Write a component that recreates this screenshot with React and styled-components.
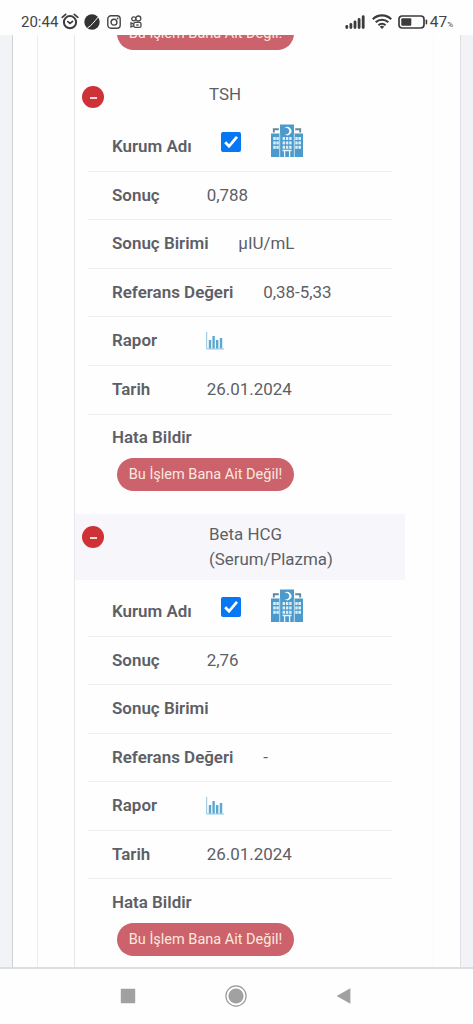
import React from 'react';
import styled, { createGlobalStyle } from 'styled-components';

const results = [
  { name: 'TSH', result: '0,788', unit: 'µIU/mL', reference: '0,38-5,33', date: '26.01.2024' },
  { name: 'Beta HCG (Serum/Plazma)', result: '2,76', unit: '', reference: '-', date: '26.01.2024', shaded: true },
];

function StatusBar() {
  return (
    <Styled.StatusBar>
      <Styled.Clock>20:44</Styled.Clock>
      <Styled.Icon width="18" height="18" viewBox="0 0 18 18" $left={3}>
        <g fill="none" stroke="#3c3c3c" strokeLinecap="round">
          <circle cx="9" cy="9.2" r="6.1" strokeWidth="2" />
          <path d="M1.2 4.3 4.7 1.3M16.8 4.3 13.3 1.3" strokeWidth="1.7" />
          <path d="M6.8 8.6 9 10.4l2.6-2" strokeWidth="1.7" />
        </g>
      </Styled.Icon>
      <Styled.Icon width="16" height="16" viewBox="0 0 16 16" $left={5}>
        <circle cx="8" cy="8" r="7.7" fill="#333" />
        <path d="M3.4 14C7.5 11.5 10 8 14.6 2.6" stroke="#fff" strokeWidth="1" fill="none" />
        <path d="M13.4 1.4 15.5 3.3" stroke="#fff" strokeWidth="0.7" />
      </Styled.Icon>
      <Styled.Icon width="14" height="14" viewBox="0 0 14 14" $left={7}>
        <g fill="none" stroke="#444" strokeWidth="1.4">
          <rect x="0.8" y="0.8" width="12.4" height="12.4" rx="3.2" />
          <circle cx="7" cy="7.2" r="2.9" />
        </g>
        <circle cx="10.6" cy="3.4" r="0.9" fill="#444" />
      </Styled.Icon>
      <Styled.Icon width="12" height="14" viewBox="0 0 12 14" $left={9}>
        <g fill="none" stroke="#4a4a4a" strokeWidth="1.3">
          <circle cx="3.8" cy="3.8" r="2" />
          <circle cx="8.3" cy="3.5" r="2.5" />
          <rect x="3.8" y="7.4" width="7.2" height="5" rx="1.4" />
          <path d="M3.8 9.4 1 7.8v4.2l2.8-1.4" />
          <path d="M6.2 10h2.4" />
        </g>
      </Styled.Icon>
      <Styled.StatusRight>
        <Styled.Icon width="22" height="14" viewBox="0 0 22 14">
          <path
            d="M1.8 12.7v-1.2M5.9 12.7V9.5M10 12.7V7M14.1 12.7V4.5M18.2 12.7V1.8"
            transform="translate(0 -.2)"
            stroke="#3c3c3c"
            strokeWidth="2.8"
            strokeLinecap="round"
          />
        </Styled.Icon>
        <Styled.Icon width="20" height="16" viewBox="0 0 20 16" $left={5}>
          <g fill="none" stroke="#3c3c3c" strokeWidth="2.1">
            <path d="M.8 5.2a13 13 0 0 1 18.4 0" />
            <path d="M3.7 8.3a9 9 0 0 1 12.6 0" />
            <path d="M6.5 11.3a5 5 0 0 1 7 0" />
          </g>
          <path d="m7.8 12.8 2.2 2.3 2.2-2.3a3.2 3.2 0 0 0-4.4 0Z" fill="#3c3c3c" />
        </Styled.Icon>
        <Styled.Icon width="30" height="14" viewBox="0 0 30 14" $left={6}>
          <rect x="1" y="1" width="25" height="12" rx="3.2" fill="none" stroke="#3c3c3c" strokeWidth="1.7" />
          <rect x="3.3" y="3.2" width="10" height="7.6" rx="1" fill="#3c3c3c" />
          <path d="M28.4 5.2v3.6" stroke="#3c3c3c" strokeWidth="1.6" strokeLinecap="round" />
        </Styled.Icon>
        <Styled.Percent>47<small>%</small></Styled.Percent>
      </Styled.StatusRight>
    </Styled.StatusBar>
  );
}

function HospitalIcon() {
  return (
    <svg width="32" height="33" viewBox="0 0 32 33">
      <path d="M0 9.5h9V33H0zM23 9.5h9V33h-9z" fill="#4c9acb" />
      <path d="M9 .5h14V33H9z" fill="#4c9acb" />
      <path d="M2.8 8.5V5.2h5M29.2 8.5V5.2h-5" fill="none" stroke="#61889d" strokeWidth="1.9" />
      <path d="M8.7 9.5V33M23.3 9.5V33" stroke="#d5eaf5" strokeWidth="0.9" />
      <path d="M13.4 4.2A4.1 4.1 0 1 1 13.4 10A3.3 3.3 0 1 0 13.4 4.2Z" fill="#f4fbff" />
      <g fill="#d9eef8">
        {[13, 17.4, 21.8].map((y) => (
          <React.Fragment key={y}>
            <rect x="2.2" y={y} width="2.6" height="3" />
            <rect x="5.4" y={y} width="2.4" height="3" />
            <rect x="11.6" y={y} width="2.4" height="3" />
            <rect x="14.9" y={y} width="2.4" height="3" />
            <rect x="18.2" y={y} width="2.4" height="3" />
            <rect x="24.3" y={y} width="2.4" height="3" />
            <rect x="27.4" y={y} width="2.6" height="3" />
          </React.Fragment>
        ))}
      </g>
      <path d="M11.5 26.5h9M13.6 33v-6M18.6 33v-6" stroke="#e6f4fb" strokeWidth="1.3" />
    </svg>
  );
}

function ChartIcon() {
  return (
    <svg width="18" height="18" viewBox="0 0 18 18">
      <path d="M.7 0v17H18" fill="none" stroke="#8fc3e0" strokeWidth="1" />
      <path d="M4 16.5V8M7.6 16.5V4M11.2 16.5V8M15 16.5V6" stroke="#5ba8d3" strokeWidth="2.4" />
    </svg>
  );
}

function ReportButton() {
  return <Styled.ReportButton type="button">Bu İşlem Bana Ait Değil!</Styled.ReportButton>;
}

function Row({ label, children }) {
  return (
    <Styled.Row>
      <Styled.Label>{label}</Styled.Label>
      {children}
    </Styled.Row>
  );
}

function Result({ item }) {
  return (
    <section>
      <Styled.Header $shaded={item.shaded}>
        <Styled.Collapse type="button" aria-label={item.name} />
        <Styled.Name>{item.name}</Styled.Name>
      </Styled.Header>
      <Styled.Details>
        <Styled.InstitutionRow>
          <Styled.InstitutionLabel>Kurum Adı</Styled.InstitutionLabel>
          <Styled.Checkbox>
            <svg width="20" height="20" viewBox="0 0 19 19">
              <path d="m4 9.8 3.6 3.8 7.6-9" fill="none" stroke="#fff" strokeWidth="2.6" />
            </svg>
          </Styled.Checkbox>
          <HospitalIcon />
        </Styled.InstitutionRow>
        <Row label="Sonuç">{item.result}</Row>
        <Row label="Sonuç Birimi">{item.unit}</Row>
        <Row label="Referans Değeri">{item.reference}</Row>
        <Row label="Rapor"><Styled.Chart><ChartIcon /></Styled.Chart></Row>
        <Row label="Tarih">{item.date}</Row>
        <Styled.ErrorRow>
          <Styled.Label>Hata Bildir</Styled.Label>
          <ReportButton />
        </Styled.ErrorRow>
      </Styled.Details>
    </section>
  );
}

function NavigationBar() {
  return (
    <Styled.NavigationBar>
      <svg width="16" height="16" viewBox="0 0 16 16">
        <rect x="0.8" y="0.8" width="14.4" height="14.4" rx="0.6" fill="#a1a1a1" />
      </svg>
      <svg width="22" height="22" viewBox="0 0 22 22">
        <circle cx="11" cy="11" r="10.1" fill="none" stroke="#999" strokeWidth="1.2" />
        <circle cx="11" cy="11" r="7.6" fill="#a1a1a1" />
      </svg>
      <svg width="16" height="18" viewBox="0 0 16 18">
        <path d="M.6 9 14.4 1.2v15.6Z" fill="#a1a1a1" />
      </svg>
    </Styled.NavigationBar>
  );
}

function App() {
  return (
    <Styled.Screen>
      <GlobalStyle />
      <StatusBar />
      <Styled.Page>
        <Styled.Card>
          <Styled.Panel>
            <Styled.Table>
              <Styled.Previous><ReportButton /></Styled.Previous>
              {results.map((item) => <Result key={item.name} item={item} />)}
            </Styled.Table>
          </Styled.Panel>
        </Styled.Card>
      </Styled.Page>
      <NavigationBar />
    </Styled.Screen>
  );
}

const GlobalStyle = createGlobalStyle`
  * {
    box-sizing: border-box;
  }

  body {
    margin: 0;
    background: #fefefe;
    color: #5d5f66;
    font-family: Roboto, sans-serif;
    font-size: 16.95px;
  }

  svg {
    display: block;
    flex-shrink: 0;
  }
`;

const Styled = {
  Screen: styled.div`
    display: flex;
    flex-direction: column;
    height: 1024px;
    overflow: hidden;
  `,
  StatusBar: styled.header`
    display: flex;
    align-items: center;
    height: 35px;
    padding: 8px 20px 0 21px;
    flex-shrink: 0;
    color: #444;
  `,
  Clock: styled.span`
    width: 37px;
    font-size: 15px;
    line-height: 18px;
    white-space: nowrap;
  `,
  Icon: styled.svg`
    margin-left: ${({ $left }) => $left || 0}px;
  `,
  StatusRight: styled.div`
    display: flex;
    align-items: center;
    margin-left: auto;
  `,
  Percent: styled.span`
    display: flex;
    align-items: baseline;
    margin-left: 2px;
    font-size: 15.5px;
    line-height: 18px;

    small {
      font-size: 8px;
      line-height: 1;
    }
  `,
  Page: styled.main`
    flex: 1;
    min-height: 0;
    padding: 0 12px;
    background: #f2f3f7;
    overflow: hidden;
  `,
  Card: styled.div`
    height: 100%;
    padding: 0 26px 0 24px;
    background: #fefefe;
    border-left: 1px solid #cfd1d3;
    border-right: 1px solid #dfe0e3;
  `,
  Panel: styled.div`
    height: 100%;
    padding: 0 28px 0 36px;
    border-left: 1px solid #ededed;
    border-right: 1px solid #fafafa;
  `,
  Table: styled.div`
    height: 100%;
    border-left: 1px solid #e7e7e7;
  `,
  Previous: styled.div`
    display: flex;
    align-items: flex-end;
    height: 37.9px;
    padding: 0 0 22.5px 42px;
  `,
  Header: styled.div`
    display: flex;
    align-items: flex-start;
    padding: 8.9px 60px 9px 7px;
    background: ${({ $shaded }) => ($shaded ? '#f7f7fb' : 'transparent')};
  `,
  Collapse: styled.button`
    display: flex;
    align-items: center;
    justify-content: center;
    width: 22px;
    height: 22px;
    margin: 4px 0 -4px;
    padding: 0;
    border: 0;
    border-radius: 50%;
    background: #cf3236;
    flex-shrink: 0;

    &::before {
      content: '';
      width: 7px;
      height: 2px;
      margin-top: 2px;
      background: #f5dcdc;
    }
  `,
  Name: styled.div`
    width: 140px;
    margin-left: 105px;
    font-size: 16.9px;
    line-height: 24.2px;
  `,
  Details: styled.div`
    padding: 0 13px 0 13px;
  `,
  Row: styled.div`
    display: flex;
    align-items: center;
    height: 48.55px;
    padding: 0 0 1.5px 24px;
    border-bottom: 1px solid #efefef;
    white-space: nowrap;
  `,
  InstitutionRow: styled.div`
    display: flex;
    align-items: flex-start;
    height: 56.8px;
    padding: 9.5px 0 0 24px;
    border-bottom: 1px solid #efefef;
  `,
  Label: styled.div`
    min-width: 65px;
    margin-right: 29.7px;
    font-weight: 600;
    line-height: 24px;
  `,
  InstitutionLabel: styled.div`
    width: 109px;
    padding-top: 9.2px;
    font-weight: 600;
    line-height: 24px;
  `,
  Checkbox: styled.span`
    width: 20px;
    height: 20px;
    margin: 8px 29.5px 0 0;
    border-radius: 2px;
    background: #0877f3;
  `,
  Chart: styled.span`
    padding-top: 2px;
    margin-left: -0.7px;
  `,
  ErrorRow: styled.div`
    height: 99px;
    padding: 10.5px 0 0 24px;
  `,
  ReportButton: styled.button`
    display: block;
    width: 177px;
    height: 33px;
    margin: 9px 0 0 5px;
    padding: 0;
    border: 0;
    border-radius: 17px;
    background: #cb626c;
    color: #fbe9df;
    font: 400 14.5px/33px Roboto, sans-serif;
    white-space: nowrap;
    flex-shrink: 0;

    ${() => Styled.Previous} & {
      margin: 0;
    }
  `,
  NavigationBar: styled.nav`
    display: flex;
    align-items: center;
    justify-content: space-between;
    height: 57px;
    padding: 0 121px 2px 120px;
    border-top: 2px solid #dedede;
    background: #fefefe;
    flex-shrink: 0;
  `,
};

export default App;
